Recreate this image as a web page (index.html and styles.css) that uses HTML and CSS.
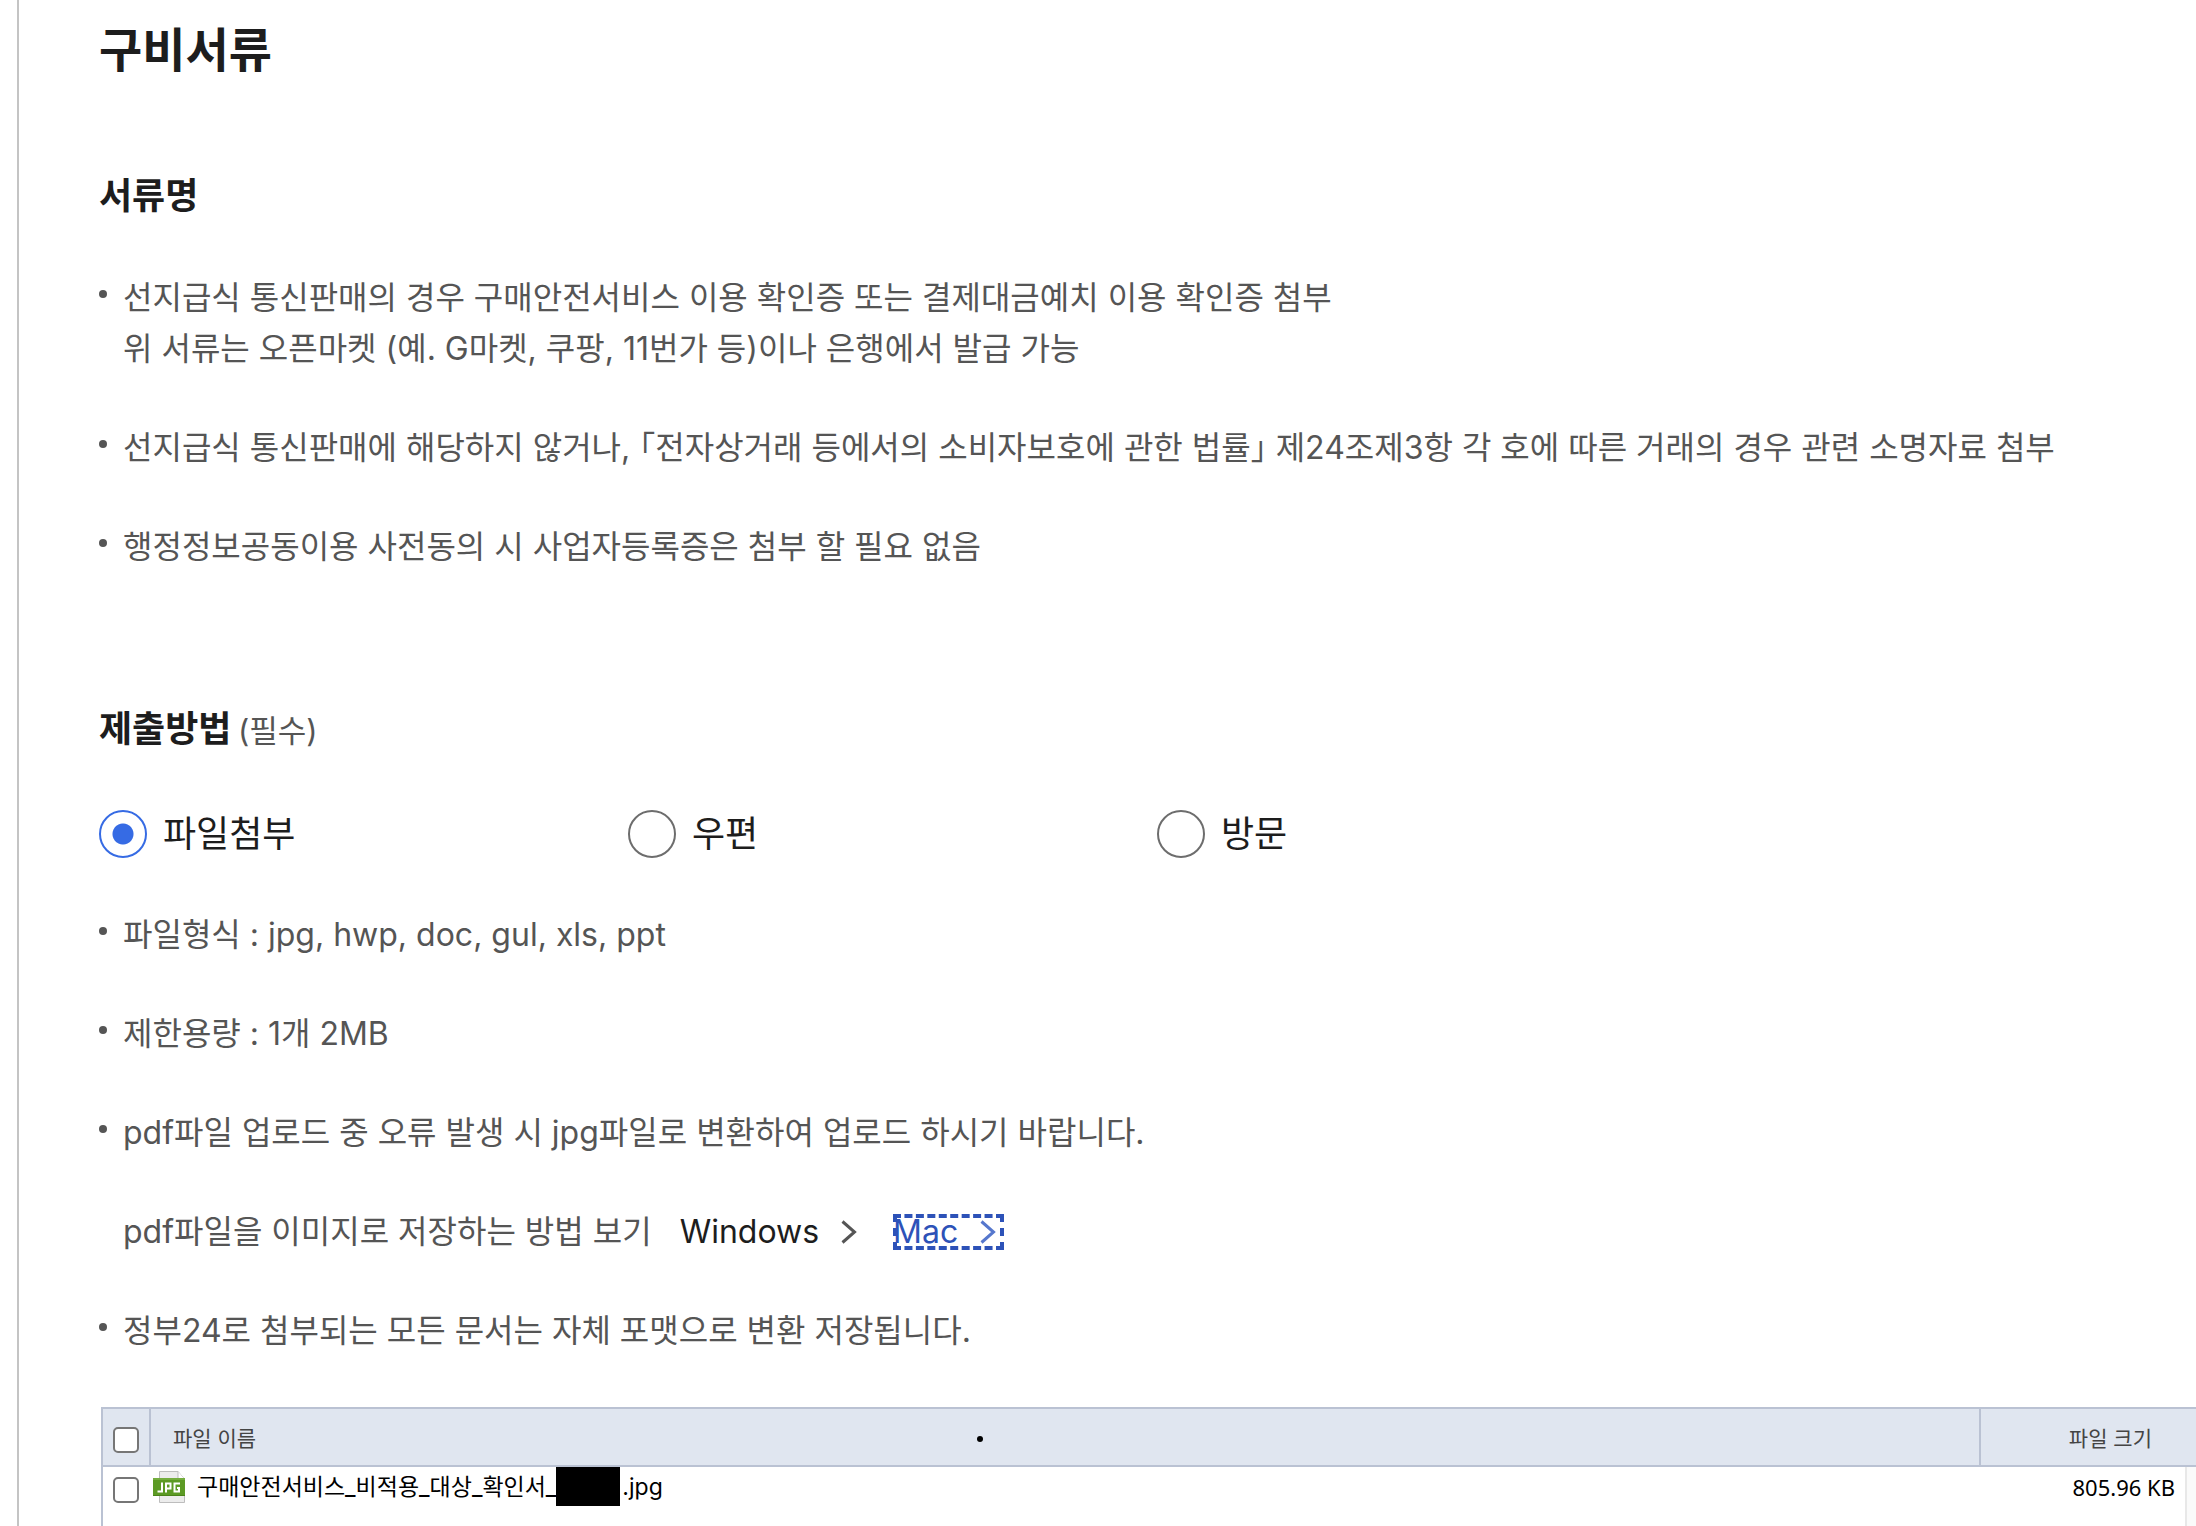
FILE: index.html
```html
<!DOCTYPE html>
<html lang="ko">
<head>
    <meta charset="UTF-8">
    <meta name="viewport" content="width=device-width, initial-scale=1.0">
    <title>구비서류</title>
    <link rel="stylesheet" href="styles.css">
</head>
<body>
<main class="container">
    <h1>구비서류</h1>

    <section class="doc-section">
        <h2>서류명</h2>
        <ul class="dot-list">
            <li>선지급식 통신판매의 경우 구매안전서비스 이용 확인증 또는 결제대금예치 이용 확인증 첨부<br>위 서류는 오픈마켓 (예. G마켓, 쿠팡, 11번가 등)이나 은행에서 발급 가능</li>
            <li>선지급식 통신판매에 해당하지 않거나, <span class="bracket">「</span>전자상거래 등에서의 소비자보호에 관한 법률<span class="bracket">」</span> 제24조제3항 각 호에 따른 거래의 경우 관련 소명자료 첨부</li>
            <li>행정정보공동이용 사전동의 시 사업자등록증은 첨부 할 필요 없음</li>
        </ul>
    </section>

    <section class="submit-section">
        <h2 id="methodTitle">제출방법 <span class="required">(필수)</span></h2>

        <div class="radio-group" role="radiogroup" aria-labelledby="methodTitle">
            <div class="radio-item">
                <input type="radio" name="method" id="methodFile" checked>
                <label for="methodFile">파일첨부</label>
            </div>
            <div class="radio-item">
                <input type="radio" name="method" id="methodMail">
                <label for="methodMail">우편</label>
            </div>
            <div class="radio-item">
                <input type="radio" name="method" id="methodVisit">
                <label for="methodVisit">방문</label>
            </div>
        </div>

        <ul class="dot-list">
            <li>파일형식 : jpg, hwp, doc, gul, xls, ppt</li>
            <li>제한용량 : 1개 2MB</li>
            <li>pdf파일 업로드 중 오류 발생 시 jpg파일로 변환하여 업로드 하시기 바랍니다.</li>
            <li class="guide">
                <span>pdf파일을 이미지로 저장하는 방법 보기</span>
                <a href="#windows" class="guide-link">Windows
                    <svg class="chevron" viewBox="0 0 16 24" aria-hidden="true"><path d="M1.5 1.5 13.5 12 1.5 22.5"/></svg>
                </a>
                <a href="#mac" class="guide-link focused">Mac
                    <svg class="chevron" viewBox="0 0 16 24" aria-hidden="true"><path d="M1.5 1.5 13.5 12 1.5 22.5"/></svg>
                </a>
            </li>
            <li>정부24로 첨부되는 모든 문서는 자체 포맷으로 변환 저장됩니다.</li>
        </ul>
    </section>

    <table class="file-table">
        <colgroup>
            <col class="col-check">
            <col>
            <col class="col-size">
            <col class="col-scroll">
        </colgroup>
        <thead>
            <tr>
                <th><input type="checkbox" aria-label="전체 선택"></th>
                <th><div class="head-name"><span class="head-label">파일 이름</span><span class="head-dot"></span></div></th>
                <th class="head-size" colspan="2">파일 크기</th>
            </tr>
        </thead>
        <tbody>
            <tr>
                <td><input type="checkbox" id="file1"></td>
                <td>
                    <label class="file-name" for="file1">
                        <svg class="jpg-icon" viewBox="0 0 32 32" aria-hidden="true">
                            <path d="M6.5 .5H25L31.5 8V31.5H6.5Z" fill="#ececec" stroke="#bdbdbd"/>
                            <path d="M25 .5V8H31.5" fill="#fff" stroke="#bdbdbd"/>
                            <path d="M0 7H32V25H0Z" fill="#5c9a24"/>
                            <path d="M0 7H32V9H0Z" fill="#74ad3e"/>
                            <path d="M0 24H32V25H0Z" fill="#4b8219"/>
                            <path d="M9 11.5V20.5H4.5M13 21.5V12.5H17.5V17.5H13M27 12.5H21.5V20.5H26V17H24" fill="none" stroke="#fff" stroke-width="2"/>
                        </svg>
                        <span>구매안전서비스_비적용_대상_확인서_</span><span class="masked"></span><span>.jpg</span>
                    </label>
                </td>
                <td class="file-size">805.96 KB</td>
                <td class="scroll-track"></td>
            </tr>
        </tbody>
    </table>
</main>
</body>
</html>
```
FILE: styles.css
```css
:root {
    --text: #1d1d1d;
    --text-sub: #555;
    --primary: #366be4;
    --focus: #2d52b8;
    --table-border: #bac2d3;
    --table-head: #e0e6f0;
}

* {
    box-sizing: border-box;
}

body {
    margin: 0;
    background-color: #fff;
    color: var(--text);
    font-family: Inter, "Noto Sans CJK KR", sans-serif;
    font-size: 32px;
    line-height: 51px;
}

.container {
    min-height: 100vh;
    margin-left: 17px;
    padding: 15px 0 0 80px;
    border-left: 2px solid #c4c4c4;
    overflow: hidden;
}

h1 {
    margin: 0;
    font-size: 47px;
    font-weight: 700;
    line-height: 70px;
}

h2 {
    margin: 0;
    font-size: 36px;
    font-weight: 700;
    line-height: 54px;
}

.doc-section {
    margin-top: 84px;
}

.submit-section {
    margin-top: 130px;
}

.required {
    color: var(--text-sub);
    font-size: 31px;
    font-weight: 400;
    margin-left: -2px;
}

.dot-list {
    display: flex;
    flex-direction: column;
    gap: 48px;
    margin: 0;
    padding: 0;
    list-style: none;
    color: var(--text-sub);
}

.doc-section .dot-list {
    margin-top: 49px;
}

.dot-list li {
    position: relative;
    padding-left: 24px;
}

.dot-list li:not(.guide)::before {
    content: '';
    position: absolute;
    top: 18px;
    left: 0;
    width: 8px;
    height: 8px;
    border-radius: 50%;
    background-color: var(--text-sub);
}

.bracket {
    font-feature-settings: "halt";
}

.radio-group {
    display: grid;
    grid-template-columns: repeat(3, minmax(0, 529px));
    margin: 49px 0 48px;
}

.radio-item {
    display: flex;
    align-items: center;
    gap: 16px;
    height: 54px;
    font-size: 36px;
}

.radio-item input {
    appearance: none;
    width: 48px;
    height: 48px;
    margin: 0;
    border: 2px solid #6d6d6d;
    border-radius: 50%;
}

.radio-item input:checked {
    border-color: var(--primary);
    background: radial-gradient(circle, var(--primary) 10px, transparent 11px);
}

.guide {
    display: flex;
    align-items: center;
}

.guide-link {
    display: flex;
    align-items: center;
    gap: 22px;
    height: 36px;
    margin-left: 28px;
    padding-right: 8px;
    color: var(--text);
    text-decoration: none;
}

.guide-link.focused {
    color: var(--focus);
    outline: 4px dashed var(--focus);
    outline-offset: -4px;
}

.chevron {
    width: 16px;
    height: 24px;
    fill: none;
    stroke: #555;
    stroke-width: 3;
}

.focused .chevron {
    stroke: #5677cd;
}

.file-table {
    width: calc(100% - 2px);
    margin: 51px 0 0 2px;
    border-collapse: separate;
    border-spacing: 0;
    border-left: 2px solid var(--table-border);
    table-layout: fixed;
    font-size: 23px;
    line-height: 38px;
    color: #000;
}

.col-check {
    width: 46px;
}

.col-size {
    width: 206px;
}

.col-scroll {
    width: 11px;
}

.file-table th {
    height: 60px;
    padding: 4px 0 0;
    border-top: 2px solid var(--table-border);
    border-bottom: 2px solid var(--table-border);
    background-color: var(--table-head);
    color: #444;
    font-size: 21px;
    font-weight: 400;
}

.file-table th + th {
    border-left: 2px solid var(--table-border);
}

.file-table td {
    height: 60px;
    padding: 0;
    vertical-align: top;
}

.file-table th.head-size {
    padding-right: 44px;
    text-align: right;
}

.file-table input {
    appearance: none;
    display: block;
    width: 26px;
    height: 26px;
    margin: 2px auto 0;
    border: 2px solid #767676;
    border-radius: 5px;
    background-color: #fff;
}

.file-table td input {
    margin-top: 10px;
}

.head-name {
    display: flex;
    align-items: center;
    padding-left: 22px;
    text-align: left;
}

.head-label {
    width: 44.5%;
}

.head-dot {
    width: 6px;
    height: 6px;
    border-radius: 50%;
    background-color: #000;
}

.file-name {
    display: flex;
    align-items: center;
    height: 39px;
    padding-left: 4px;
    line-height: 42px;
}

.jpg-icon {
    width: 32px;
    height: 32px;
    margin-right: 12px;
}

.masked {
    width: 64px;
    height: 39px;
    margin-right: 2px;
    background-color: #000;
}

.file-table .file-size {
    padding-right: 10px;
    font-family: "Noto Sans", "Noto Sans CJK KR", sans-serif;
    font-size: 22px;
    line-height: 40px;
    text-align: right;
}

.scroll-track {
    border-left: 2px solid #e8e8e8;
    background-color: #fafafa;
}
```
